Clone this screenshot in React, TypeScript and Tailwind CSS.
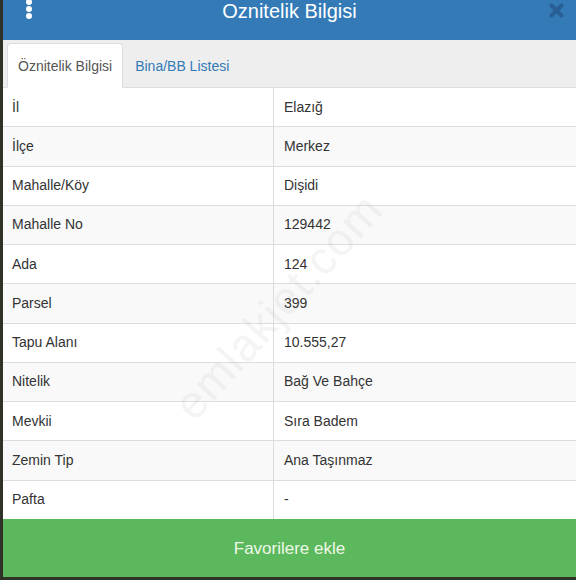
const rows: [string, string][] = [
  ["İl", "Elazığ"],
  ["İlçe", "Merkez"],
  ["Mahalle/Köy", "Dişidi"],
  ["Mahalle No", "129442"],
  ["Ada", "124"],
  ["Parsel", "399"],
  ["Tapu Alanı", "10.555,27"],
  ["Nitelik", "Bağ Ve Bahçe"],
  ["Mevkii", "Sıra Badem"],
  ["Zemin Tip", "Ana Taşınmaz"],
  ["Pafta", "-"],
];

const App = () => {
  return (
    <div className="w-[576px] h-[580px] bg-[#2f3226] pl-[3px] pb-[3px] font-['Liberation_Sans',Arial,sans-serif] overflow-hidden">
      <div className="relative h-full flex flex-col bg-white">
        {/* header */}
        <div className="relative h-[40px] shrink-0 bg-[#337ab7] flex items-center justify-center">
          <div className="absolute left-[23px] top-[-1px] flex flex-col gap-[1px]">
            <span className="block w-[6px] h-[6px] rounded-full bg-white" />
            <span className="block w-[6px] h-[6px] rounded-full bg-white" />
            <span className="block w-[6px] h-[6px] rounded-full bg-white" />
          </div>
          <h1 className="text-white text-[20px] leading-none -mt-[19px]">Oznitelik Bilgisi</h1>
          <svg className="absolute right-[12px] top-[3px]" width="15" height="15" viewBox="0 0 15 15">
            <path d="M2.5 2.5 L12.5 12.5 M12.5 2.5 L2.5 12.5" stroke="#2a5f95" strokeWidth="4" strokeLinecap="round" />
          </svg>
        </div>

        {/* tabs */}
        <div className="h-[48px] shrink-0 bg-[#eeeeee] border-b border-[#dddddd] flex items-end pl-[4px] text-[14px]">
          <div className="h-[45px] -mb-px pt-[2px] px-[10px] flex items-center bg-white border border-[#dddddd] border-b-white rounded-t-[4px] text-[#555555]">
            Öznitelik Bilgisi
          </div>
          <div className="h-[45px] pt-[3px] px-[12px] flex items-center text-[#337ab7]">Bina/BB Listesi</div>
        </div>

        {/* attribute table */}
        <div className="relative flex-1 flex flex-col text-[14px] text-[#333333]">
          {rows.map(([k, v], i) => (
            <div
              key={k}
              className={`flex-1 flex items-center border-t border-[#dddddd] first:border-t-0 ${i % 2 === 1 ? "bg-[#f9f9f9]" : "bg-white"}`}
            >
              <div className="w-[271px] pl-[9px] h-full flex items-center border-r border-[#dddddd]">{k}</div>
              <div className="pl-[10px]">{v}</div>
            </div>
          ))}
          <div className="pointer-events-none absolute left-[180px] top-[290px] -rotate-[48deg] origin-left text-[46px] text-[#a0a0a0] opacity-[0.1] tracking-wide">
            emlakjet.com
          </div>
        </div>

        <button className="h-[58px] shrink-0 bg-[#5cb85c] text-[#eef8e8] text-[17px] pt-[2px] flex items-center justify-center">
          Favorilere ekle
        </button>
      </div>
    </div>
  );
};

export default App;
